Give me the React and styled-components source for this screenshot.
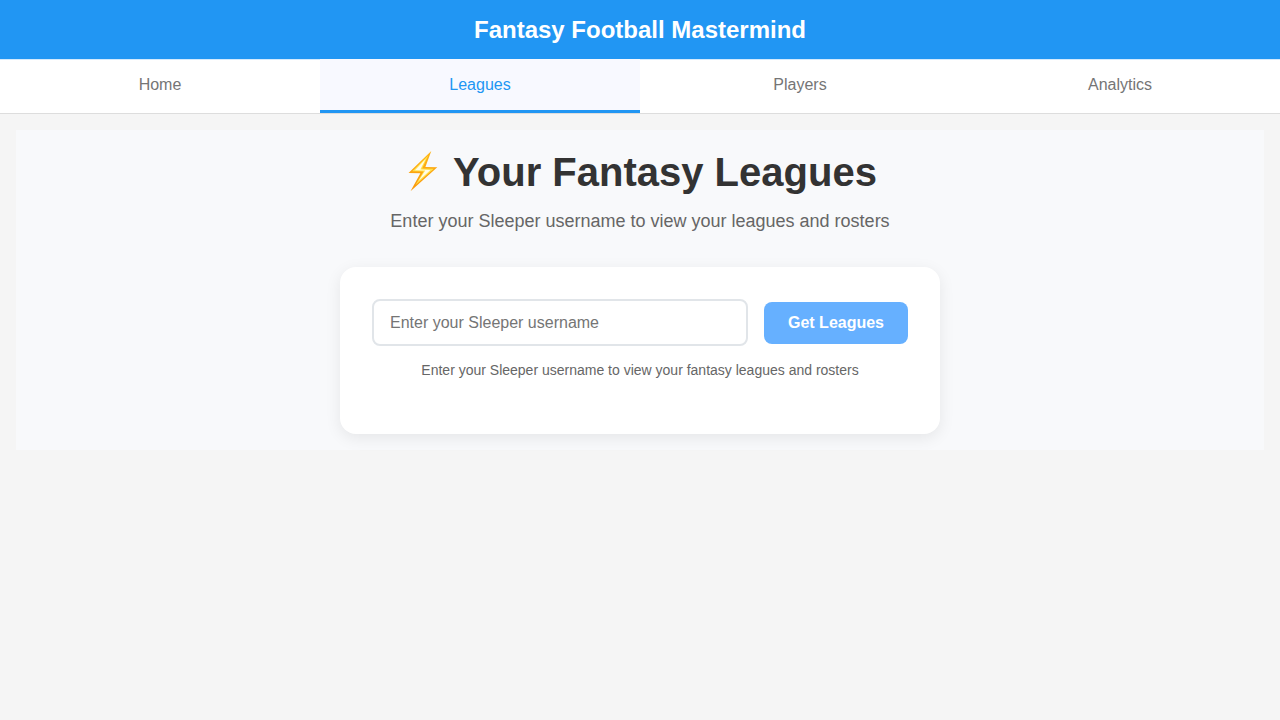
import React from 'react';
import styled, { createGlobalStyle } from 'styled-components';

const GlobalStyle = createGlobalStyle`
  * { box-sizing: border-box; }
  body {
    margin: 0;
    background: #f5f5f5;
    color: #333;
    font-family: "Liberation Sans", Arial, sans-serif;
  }
`;

const Header = styled.header`
  background: #2196f3;
  color: #fff;
  padding: 16px;
  text-align: center;
`;

const Brand = styled.h1`
  margin: 0;
  font-size: 24px;
  line-height: 27px;
`;

const Nav = styled.nav`
  display: flex;
  background: #fff;
  border-bottom: 1px solid #ddd;
  box-shadow: inset 0 1px #d3eafd;
`;

const Tab = styled.button`
  flex: 1;
  height: 54px;
  padding: 16px;
  border: 0;
  border-bottom: 3px solid ${(p) => (p.$active ? '#2196f3' : 'transparent')};
  background: ${(p) => (p.$active ? '#f8f9ff' : 'transparent')};
  color: ${(p) => (p.$active ? '#2196f3' : '#757575')};
  font-family: inherit;
  font-size: 16px;
  line-height: 18px;
`;

const Main = styled.main`
  padding: 16px;
`;

const Page = styled.section`
  padding: 16px;
  background: #f8f9fb;
`;

const Intro = styled.div`
  margin-bottom: 32px;
  text-align: center;
`;

const Title = styled.h2`
  display: flex;
  justify-content: center;
  align-items: center;
  gap: 12px;
  margin: 0 0 8px;
  height: 53px;
  font-size: 40px;
`;

const Bolt = styled.svg`
  width: 38px;
  height: 53px;
  flex: none;
`;

const Subtitle = styled.p`
  margin: 0;
  color: #666;
  font-size: 18px;
  line-height: 28px;
`;

const Card = styled.form`
  width: 600px;
  height: 167px;
  margin: 0 auto;
  padding: 32px;
  border-radius: 16px;
  background: #fff;
  box-shadow: 0 4px 16px rgba(0, 0, 0, 0.08);
`;

const Row = styled.div`
  display: flex;
  align-items: center;
  gap: 16px;
  margin-bottom: 16px;
`;

const Input = styled.input`
  flex: 1;
  min-width: 0;
  height: 47px;
  padding: 12px 16px;
  border: 2px solid #e1e5e9;
  border-radius: 8px;
  font-family: inherit;
  font-size: 16px;
  &::placeholder { color: #757575; }
`;

const Submit = styled.button`
  width: 144px;
  height: 42px;
  padding: 0;
  border: 0;
  border-radius: 8px;
  background: #66b0ff;
  color: #fff;
  font-family: inherit;
  font-size: 16px;
  font-weight: 700;
`;

const Hint = styled.p`
  margin: 0;
  color: #666;
  font-size: 14px;
  line-height: 16px;
  text-align: center;
`;

const tabs = ['Home', 'Leagues', 'Players', 'Analytics'];

function BoltIcon() {
  return (
    <Bolt viewBox="3.5 1 38 53" aria-hidden="true">
      <defs>
        <linearGradient id="bolt-edge" x1="0" y1="0" x2="0" y2="1">
          <stop offset="0" stopColor="#ffb515" />
          <stop offset="1" stopColor="#f9970b" />
        </linearGradient>
      </defs>
      <path d="M31.8 5.9L9 28L20.9 28.2L11 46.2L37.8 22.2L25.9 21.9Z" fill="url(#bolt-edge)" />
      <path d="M28.8 10.3L12.7 26.3L24 26.5L16 40L34.3 23.8L22.7 23.5Z" fill="#ffe04a" />
      <path d="M26.2 14L15.4 25.2L25.7 25.4L19.2 35.8L31 24.9L20.8 24.6Z" fill="#fffde8" />
    </Bolt>
  );
}

export default function App() {
  return (
    <>
      <GlobalStyle />
      <Header><Brand>Fantasy Football Mastermind</Brand></Header>
      <Nav>
        {tabs.map((t) => <Tab key={t} $active={t === 'Leagues'}>{t}</Tab>)}
      </Nav>
      <Main>
        <Page>
          <Intro>
            <Title><BoltIcon /><span>Your Fantasy Leagues</span></Title>
            <Subtitle>Enter your Sleeper username to view your leagues and rosters</Subtitle>
          </Intro>
          <Card>
            <Row>
              <Input placeholder="Enter your Sleeper username" />
              <Submit type="button">Get Leagues</Submit>
            </Row>
            <Hint>Enter your Sleeper username to view your fantasy leagues and rosters</Hint>
          </Card>
        </Page>
      </Main>
    </>
  );
}
